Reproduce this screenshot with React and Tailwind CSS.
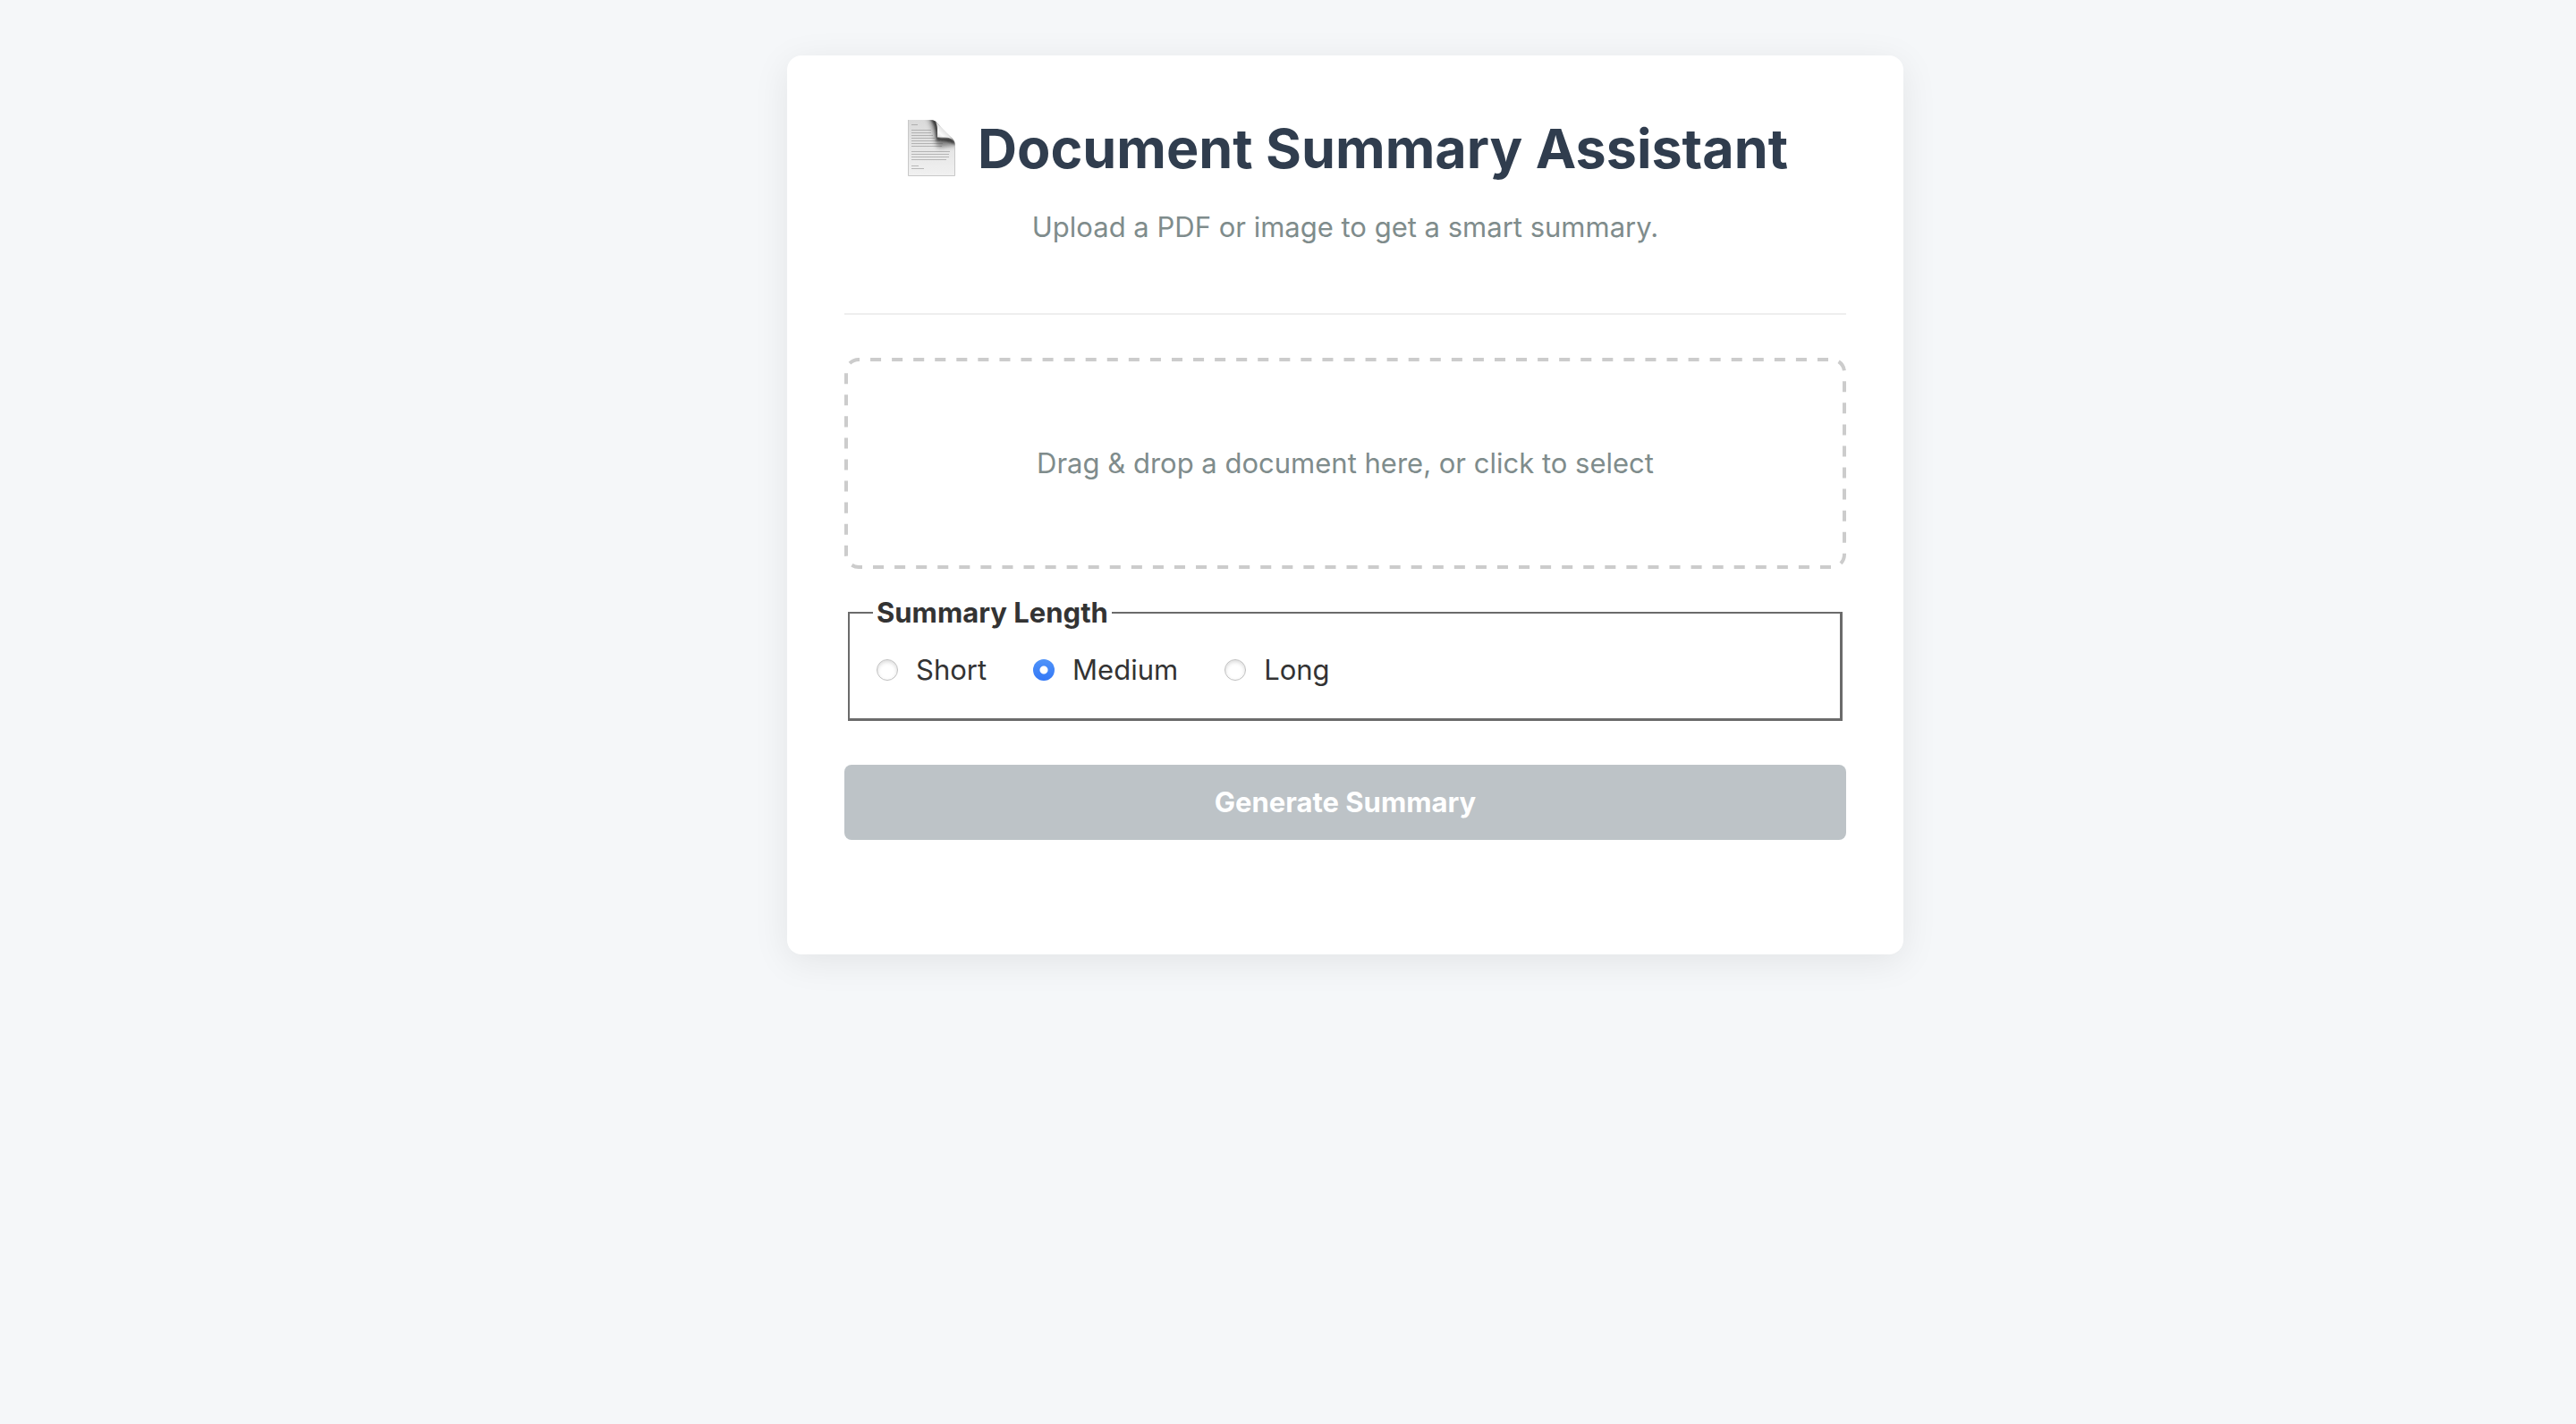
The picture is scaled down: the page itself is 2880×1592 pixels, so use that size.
import { useState } from "react";

const LENGTHS = ["Short", "Medium", "Long"];

const TEXT_LINES = [
  { y: 5, w: 7 },
  { y: 11, w: 22 },
  { y: 14, w: 22 },
  { y: 17, w: 24 },
  { y: 20, w: 26 },
  { y: 23, w: 32 },
  { y: 26, w: 35 },
  { y: 29, w: 34 },
  { y: 35, w: 43 },
  { y: 38, w: 42 },
  { y: 41, w: 42 },
  { y: 44, w: 39 },
  { y: 51, w: 8 },
  { y: 54, w: 14 },
];

function PageIcon() {
  return (
    <svg viewBox="0 0 54 64" className="h-16 w-[54px] shrink-0" aria-hidden="true">
      <defs>
        <linearGradient id="sheet" x1="0" y1="0" x2="0" y2="1">
          <stop offset="0" stopColor="#dadada" />
          <stop offset="1" stopColor="#f1f1f1" />
        </linearGradient>
        <linearGradient id="flap" gradientUnits="userSpaceOnUse" x1="33" y1="20" x2="43" y2="10">
          <stop offset="0" stopColor="#dcdcdc" />
          <stop offset="0.4" stopColor="#fbfbfb" />
          <stop offset="1" stopColor="#d8d8d8" />
        </linearGradient>
        <filter id="wide" x="-50%" y="-50%" width="200%" height="200%">
          <feGaussianBlur stdDeviation="2.5" />
        </filter>
        <filter id="tight" x="-50%" y="-50%" width="200%" height="200%">
          <feGaussianBlur stdDeviation="1.2" />
        </filter>
        <clipPath id="outline">
          <path d="M0 0H25C29 0 31 1 33 4L50 21C52 23 53 26 53 30V63H0Z" />
        </clipPath>
      </defs>
      <g clipPath="url(#outline)">
        <rect width="54" height="63" fill="url(#sheet)" />
        <g fill="#8a8a8a" opacity="0.55">
          {TEXT_LINES.map((line) => (
            <rect key={line.y} x="4" y={line.y} width={line.w} height="1" />
          ))}
        </g>
        <path d="M22 -2H34V20H56V28L34 31C28 24 30 8 22 -2Z" fill="#555" opacity="0.65" filter="url(#wide)" />
        <path d="M25 -1H35V20H44C50 20 52 24 54 28C48 24 40 24 32 23C31 14 31 5 25 -1Z" fill="#222" opacity="0.75" filter="url(#tight)" />
        <path d="M0.500 0V62.500H52.500V30" fill="none" stroke="#c8c8c8" />
      </g>
      <path d="M30 1C32 3 33 7 33 11V19.500H41C46 19.500 49 21 51.500 23.500L33 4Z" fill="url(#flap)" />
    </svg>
  );
}

function DashedOutline() {
  return (
    <svg className="pointer-events-none absolute inset-0 size-full" aria-hidden="true">
      <rect
        x="2"
        y="2"
        rx="14"
        pathLength="2664"
        strokeDasharray="12 12"
        strokeDashoffset="-13"
        className="h-[calc(100%-4px)] w-[calc(100%-4px)] fill-none stroke-[#ccc] stroke-4"
      />
    </svg>
  );
}

export default function App() {
  const [length, setLength] = useState("Medium");
  return (
    <div className="min-h-screen bg-[#f5f7f9] pt-[62px] pb-16 pl-32 font-[Inter,sans-serif] text-[31px] leading-[48px] text-[#333]">
      <main className="mx-auto max-w-[1248px] rounded-2xl bg-white px-16 pt-16 pb-32 shadow-[0_8px_40px_rgba(0,0,0,0.08)]">
        <header className="border-b-2 border-[#eee] pb-[72px] text-center">
          <h1 className="flex items-center justify-center gap-6 pl-1.5 text-[61px] leading-[80px] font-bold text-[#303d4e]">
            <PageIcon />
            Document Summary Assistant
          </h1>
          <p className="mt-6 text-[#7f8c8c]">Upload a PDF or image to get a smart summary.</p>
        </header>

        <button type="button" className="relative mt-12 block w-full rounded-2xl py-[94px] text-[#7f8c8c]">
          <DashedOutline />
          Drag &amp; drop a document here, or click to select
        </button>

        <fieldset className="mx-1 mt-6 border-t-2 border-r-[3px] border-b-[3px] border-l-2 border-[#6b6b6b] px-[26px] pt-[15px] pb-[30px]">
          <legend className="px-1 leading-[50px] font-bold">Summary Length</legend>
          <div className="flex gap-[52px] pl-1">
            {LENGTHS.map((name) => (
              <label key={name} className="flex items-center gap-5">
                <input
                  type="radio"
                  name="summary-length"
                  value={name}
                  checked={length === name}
                  onChange={() => setLength(name)}
                  className="size-6 appearance-none rounded-full border border-[#c0c0c0] bg-white shadow-[inset_0_2px_4px_rgba(0,0,0,0.15)] checked:border-0 checked:bg-[radial-gradient(circle,#fff_4px,transparent_5px),linear-gradient(#4f93f9,#3478f6)] checked:shadow-none"
                />
                {name}
              </label>
            ))}
          </div>
        </fieldset>

        <button
          type="button"
          disabled
          className="mt-[49px] block w-full rounded-lg bg-[#bdc3c7] py-[18px] font-bold text-white"
        >
          Generate Summary
        </button>
      </main>
    </div>
  );
}
